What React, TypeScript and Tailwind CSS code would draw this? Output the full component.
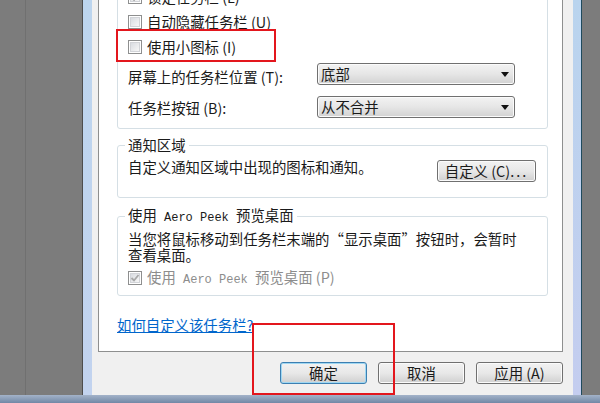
import type { ReactNode } from 'react'

function CheckBox({ checked, disabled }: { checked?: boolean; disabled?: boolean }) {
  return (
    <span className="flex h-[14px] w-[14px] shrink-0 items-center justify-center border border-[#8e8f8f] bg-white">
      <span className="relative flex h-[10px] w-[10px] items-center justify-center border border-[#d2d4d8] bg-gradient-to-br from-[#d9dce1] to-[#f7f7f7]">
        {checked && (
          <svg width="10" height="10" viewBox="0 0 10 10" className="absolute left-[-1px] top-[-1px]">
            <path d="M1.5 5 L4 7.5 L8.5 2" fill="none" stroke={disabled ? '#a8a8a8' : '#2a2a2a'} strokeWidth="1.8" />
          </svg>
        )}
      </span>
    </span>
  )
}

function CheckRow({ label, checked, disabled }: { label: ReactNode; checked?: boolean; disabled?: boolean }) {
  return (
    <div className={`flex h-[25px] items-center gap-[5px] ${disabled ? 'text-[#8d8d8d]' : ''}`}>
      <CheckBox checked={checked} disabled={disabled} />
      <span className="leading-[16px]">{label}</span>
    </div>
  )
}

function Select({ value }: { value: string }) {
  return (
    <div className="flex h-[22px] w-[198px] items-center justify-between rounded-[3px] border border-[#707070] bg-gradient-to-b from-[#f3f3f3] via-[#e6e6e6] to-[#d2d2d2] pl-[3px] pr-[5px] shadow-[inset_0_0_0_1px_#fbfbfb]">
      <span className="leading-[16px]">{value}</span>
      <svg width="8" height="5" viewBox="0 0 8 5">
        <path d="M0 0 H8 L4 5 Z" fill="#111" />
      </svg>
    </div>
  )
}

function Button({ children, primary, wide }: { children: ReactNode; primary?: boolean; wide?: boolean }) {
  return (
    <button
      className={`flex h-[22px] items-center justify-center rounded-[3px] border bg-gradient-to-b from-[#f2f2f2] via-[#e8e8e8] to-[#d0d0d0] leading-[16px] ${
        wide ? 'w-[99px]' : 'w-[87px]'
      } ${
        primary
          ? 'border-[#3c7fb1] shadow-[inset_0_0_0_1px_#9fd7f2]'
          : 'border-[#707070] shadow-[inset_0_0_0_1px_#fbfbfb]'
      }`}
    >
      {children}
    </button>
  )
}

function Legend({ children }: { children: ReactNode }) {
  return <legend className="ml-[-3px] px-[3px] leading-[16px]">{children}</legend>
}

const mono = "font-['Liberation_Mono',monospace] text-[12px]"

export default function App() {
  return (
    <div className="relative flex h-[403px] w-[600px] flex-col overflow-hidden bg-[#7c7c7c] font-['Noto_Sans_CJK_SC','Liberation_Sans',sans-serif] text-[14.4px] text-[#1a1a1a]">
      <div className="flex h-[395px]">
        <div className="w-[26px] border-r border-[#707070]" />
        <div className="w-[56px]" />

        {/* window */}
        <div className="flex w-[500px] border-x border-l-[#4d4d4d] border-r-[#1f4a5d]">
          <div className="w-[9px] bg-gradient-to-b from-[#bcd5ee] to-[#c2d3ef]" />

          <div className="flex flex-1 flex-col bg-[#f0f0f0] pl-[6px] pr-[10px]">
            {/* tab page */}
            <div className="flex h-[352px] w-[465px] flex-col overflow-hidden border-x border-b border-[#8e8f8f] bg-white pl-[18px] pr-[14px]">
              <fieldset className="-mt-[36px] rounded-[3px] border border-[#d5dfe5] pb-[10px] pl-[10px]">
                <Legend>任务栏外观</Legend>
                <div className="mt-[4px] flex flex-col">
                  <CheckRow checked label="锁定任务栏 (L)" />
                  <CheckRow label="自动隐藏任务栏 (U)" />
                  <CheckRow label="使用小图标 (I)" />
                </div>
                <div className="mt-[4px] flex items-center">
                  <span className="mt-[6px] w-[189px] leading-[16px]">屏幕上的任务栏位置 (T):</span>
                  <Select value="底部" />
                </div>
                <div className="mt-[11px] flex items-center">
                  <span className="mt-[2px] w-[189px] leading-[16px]">任务栏按钮 (B):</span>
                  <Select value="从不合并" />
                </div>
              </fieldset>

              <fieldset className="mt-[8px] rounded-[3px] border border-[#d5dfe5] pb-[15px] pl-[10px] pr-[11px]">
                <Legend>通知区域</Legend>
                <div className="mt-[6px] flex items-start justify-between">
                  <span className="leading-[16px]">自定义通知区域中出现的图标和通知。</span>
                  <div className="mt-[1px]">
                    <Button wide>
                      自定义 (C)<span className="tracking-[2px]">...</span>
                    </Button>
                  </div>
                </div>
              </fieldset>

              <fieldset className="mt-[9px] rounded-[3px] border border-[#d5dfe5] pb-[7px] pl-[10px]">
                <Legend>
                  使用<span className={mono}> Aero Peek </span>预览桌面
                </Legend>
                <p className="mt-[5px] leading-[16px]">
                  当您将鼠标移动到任务栏末端的
                  <span className="inline-block w-[1em] text-right">“</span>
                  显示桌面
                  <span className="inline-block w-[1em] text-left">”</span>
                  按钮时，会暂时
                  <br />
                  查看桌面。
                </p>
                <div className="mt-[5px] flex h-[20px] items-center gap-[5px] text-[#8d8d8d]">
                  <CheckBox checked disabled />
                  <span className="leading-[16px]">
                    使用<span className={mono}> Aero Peek </span>预览桌面 (P)
                  </span>
                </div>
              </fieldset>

              <a href="#" className="mt-[21px] self-start leading-[16px] text-[#0066cc] underline">
                如何自定义该任务栏?
              </a>
            </div>

            {/* buttons */}
            <div className="mt-[10px] flex w-[465px] justify-end gap-[11px]">
              <Button primary>确定</Button>
              <Button>取消</Button>
              <Button>应用 (A)</Button>
            </div>
          </div>

          <div className="w-[8px] bg-gradient-to-b from-[#b9d4ee] to-[#c4cdef]" />
        </div>
        <div className="flex-1" />
      </div>
      <div className="h-[8px] bg-gradient-to-b from-[#a3b3c9] to-[#7288a6]" />

      {/* red annotation marks */}
      <div className="absolute left-[116px] top-[29px] h-[33px] w-[160px] border-2 border-[#e3161d]" />
      <div className="absolute left-[252px] top-[323px] h-[72px] w-[143px] border-2 border-[#e3161d]" />
    </div>
  )
}
